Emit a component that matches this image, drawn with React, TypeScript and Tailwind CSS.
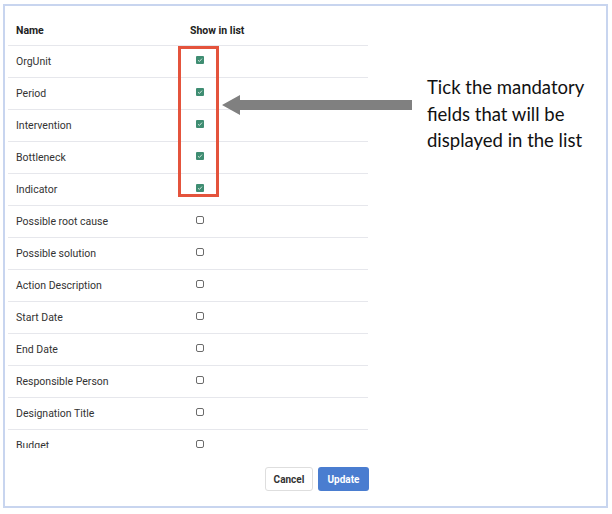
const fields = [
  { name: "OrgUnit", show: true },
  { name: "Period", show: true },
  { name: "Intervention", show: true },
  { name: "Bottleneck", show: true },
  { name: "Indicator", show: true },
  { name: "Possible root cause", show: false },
  { name: "Possible solution", show: false },
  { name: "Action Description", show: false },
  { name: "Start Date", show: false },
  { name: "End Date", show: false },
  { name: "Responsible Person", show: false },
  { name: "Designation Title", show: false },
  { name: "Budget", show: false },
];

function Checkbox({ checked }: { checked: boolean }) {
  if (checked) {
    return (
      <span className="flex h-[8px] w-[8px] items-center justify-center rounded-[1px] bg-[#3f8d72]">
        <svg width="6" height="6" viewBox="0 0 6 6">
          <path d="M1 3.2 L2.4 4.5 L5 1.6" fill="none" stroke="#cfe6dc" strokeWidth="1" />
        </svg>
      </span>
    );
  }
  return <span className="block h-[8px] w-[8px] rounded-[2px] border-[1.5px] border-[#6b6b6b]" />;
}

export default function App() {
  return (
    <div className="relative h-[514px] w-[612px] bg-white pl-[3px] pt-[4px] font-['Roboto',sans-serif]">
      <div className="flex h-[504px] w-[605px] flex-col border-2 border-[#c8d5ef] pl-[3px]">
        {/* Table */}
        <div className="mt-[10px] h-[432px] w-[360px] overflow-hidden">
          <div className="flex h-[30px] items-center border-b border-[#e6e7ec] text-[10.5px] font-bold text-[#222]">
            <span className="w-[174px] pl-2">Name</span>
            <span className="pl-2">Show in list</span>
          </div>
          {fields.map((f) => (
            <div
              key={f.name}
              className="flex h-[32px] items-center border-b border-[#e6e7ec] text-[10.5px] text-[#333]"
            >
              <span className="w-[174px] pl-2">{f.name}</span>
              <span className="ml-[14px] -mt-[3px]">
                <Checkbox checked={f.show} />
              </span>
            </div>
          ))}
        </div>

        {/* Actions */}
        <div className="mt-[19px] flex w-[361px] justify-end gap-[5px]">
          <button className="h-[24px] w-[48px] rounded-[3px] border border-[#dedede] bg-white text-[10px] font-bold text-[#333]">
            Cancel
          </button>
          <button className="h-[24px] w-[51px] rounded-[3px] bg-[#4a7dd0] text-[10px] font-bold text-white">
            Update
          </button>
        </div>
      </div>

      {/* Annotation: highlight box */}
      <div className="absolute left-[178px] top-[46px] h-[151px] w-[41px] border-[3px] border-[#e4533c]" />

      {/* Annotation: arrow */}
      <svg className="absolute left-[221px] top-[94px]" width="192" height="22" viewBox="0 0 192 22">
        <path d="M1 11 L19 1 L19 6 L191 6 L191 16 L19 16 L19 21 Z" fill="#808080" />
      </svg>

      {/* Annotation: note */}
      <div className="absolute left-[427px] top-[74px] font-['Lato',sans-serif] text-[18.5px] leading-[26.5px] text-[#111]">
        <div>Tick the mandatory</div>
        <div>fields that will be</div>
        <div>displayed in the list</div>
      </div>
    </div>
  );
}
